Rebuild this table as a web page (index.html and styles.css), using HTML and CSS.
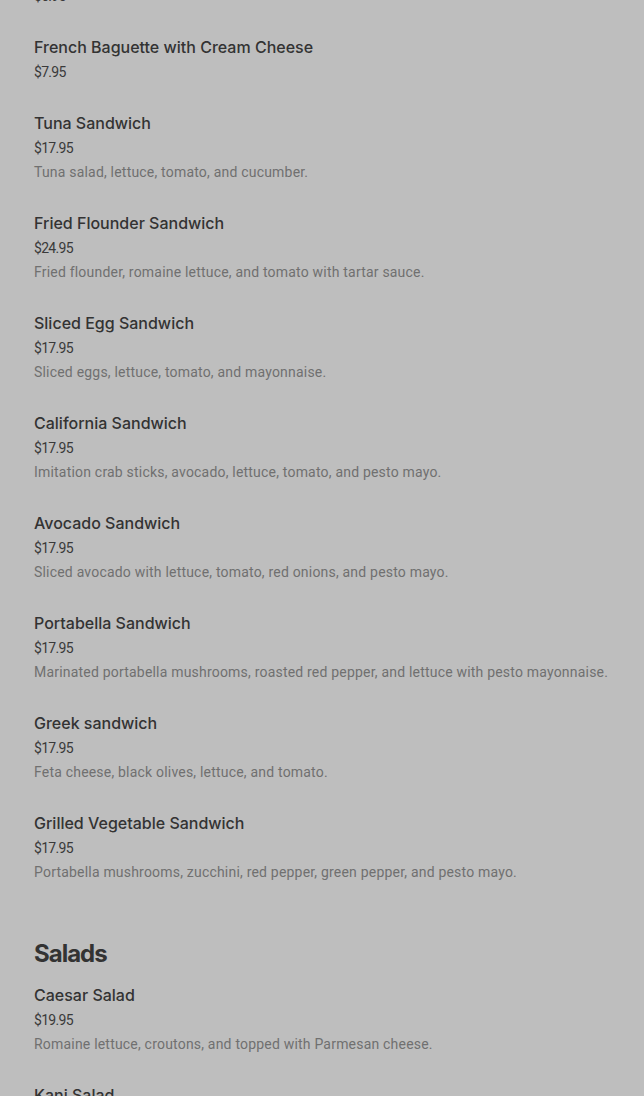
FILE: index.html
```html
<!DOCTYPE html>
<html lang="en">
<head>
<meta charset="utf-8">
<title>Menu</title>
<link rel="stylesheet" href="styles.css">
</head>
<body>
<main class="menu">
  <section class="section">
    <div class="item">
      <div class="item-title">Plain Bagel with Cream Cheese</div>
      <div class="item-price">$6.95</div>
    </div>
    <div class="item">
      <div class="item-title">French Baguette with Cream Cheese</div>
      <div class="item-price">$7.95</div>
    </div>
    <div class="item">
      <div class="item-title">Tuna Sandwich</div>
      <div class="item-price">$17.95</div>
      <div class="item-desc">Tuna salad, lettuce, tomato, and cucumber.</div>
    </div>
    <div class="item">
      <div class="item-title">Fried Flounder Sandwich</div>
      <div class="item-price">$24.95</div>
      <div class="item-desc">Fried flounder, romaine lettuce, and tomato with tartar sauce.</div>
    </div>
    <div class="item">
      <div class="item-title">Sliced Egg Sandwich</div>
      <div class="item-price">$17.95</div>
      <div class="item-desc">Sliced eggs, lettuce, tomato, and mayonnaise.</div>
    </div>
    <div class="item">
      <div class="item-title">California Sandwich</div>
      <div class="item-price">$17.95</div>
      <div class="item-desc">Imitation crab sticks, avocado, lettuce, tomato, and pesto mayo.</div>
    </div>
    <div class="item">
      <div class="item-title">Avocado Sandwich</div>
      <div class="item-price">$17.95</div>
      <div class="item-desc">Sliced avocado with lettuce, tomato, red onions, and pesto mayo.</div>
    </div>
    <div class="item">
      <div class="item-title">Portabella Sandwich</div>
      <div class="item-price">$17.95</div>
      <div class="item-desc">Marinated portabella mushrooms, roasted red pepper, and lettuce with pesto mayonnaise.</div>
    </div>
    <div class="item">
      <div class="item-title">Greek sandwich</div>
      <div class="item-price">$17.95</div>
      <div class="item-desc">Feta cheese, black olives, lettuce, and tomato.</div>
    </div>
    <div class="item">
      <div class="item-title">Grilled Vegetable Sandwich</div>
      <div class="item-price">$17.95</div>
      <div class="item-desc">Portabella mushrooms, zucchini, red pepper, green pepper, and pesto mayo.</div>
    </div>
  </section>
  <section class="section">
    <h2 class="section-title">Salads</h2>
    <div class="item">
      <div class="item-title">Caesar Salad</div>
      <div class="item-price">$19.95</div>
      <div class="item-desc">Romaine lettuce, croutons, and topped with Parmesan cheese.</div>
    </div>
    <div class="item">
      <div class="item-title">Kani Salad</div>
      <div class="item-price">$19.95</div>
      <div class="item-desc">Imitation crab, cucumber, and spicy mayo.</div>
    </div>
  </section>
</main>
</body>
</html>
```

FILE: styles.css
```css
html, body {
  margin: 0;
  padding: 0;
  background: #bebebe;
  overflow: hidden;
}
body {
  font-family: Inter, "Liberation Sans", sans-serif;
  color: #333333;
}
.menu {
  margin-top: -55px;
  padding: 0 34px;
}
.section {
  display: flex;
  flex-direction: column;
}
.section-title {
  margin: 42px 0 0;
  font-size: 24px;
  line-height: 30px;
  font-weight: 700;
  color: #333333;
  letter-spacing: -1px;
}
.item {
  padding: 14px 0 13px;
}
.item-title {
  font-size: 16px;
  line-height: 24px;
  font-weight: 500;
  margin-bottom: 1px;
  color: #333333;
}
.item-price {
  font-family: Roboto, sans-serif;
  font-size: 14px;
  line-height: 24px;
  letter-spacing: -0.7px;
  color: #3a3a3a;
}
.item-desc {
  font-family: Roboto, sans-serif;
  font-size: 14px;
  line-height: 24px;
  letter-spacing: 0.2px;
  color: #707070;
}
```
